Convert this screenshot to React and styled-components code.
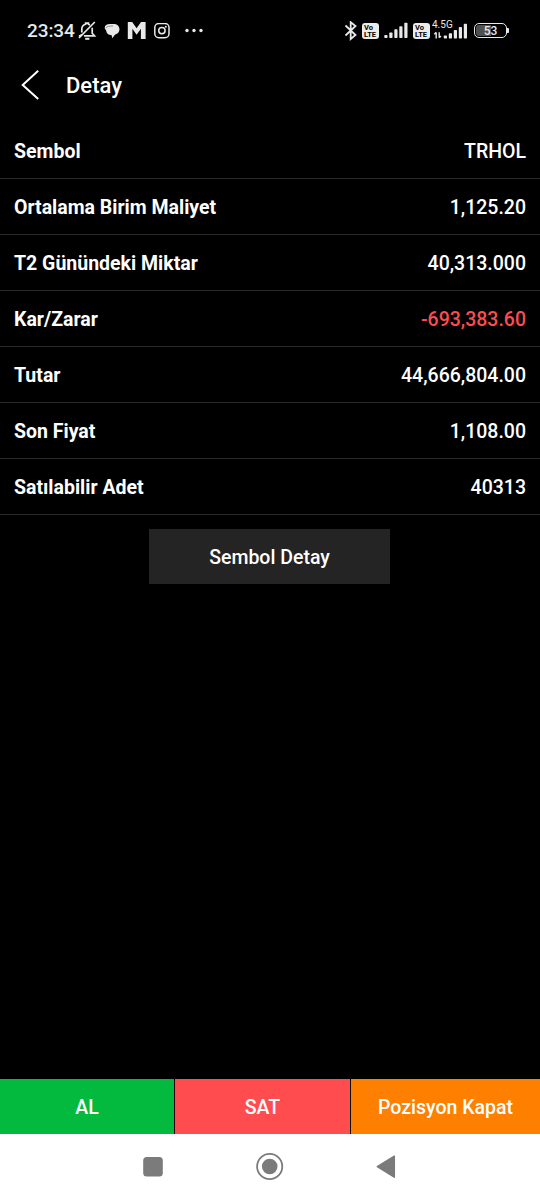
import React from "react";
import styled, { createGlobalStyle } from "styled-components";

const GlobalStyle = createGlobalStyle`
  * { box-sizing: border-box; }
  body { margin: 0; background: #000; }
  button { border: 0; padding: 0; font: inherit; color: inherit; background: none; }
`;

const Screen = styled.div`
  display: flex;
  flex-direction: column;
  width: 540px;
  height: 1199px;
  background: #000;
  color: #fff;
  font-family: Roboto, "Liberation Sans", sans-serif;
  font-size: 19.5px;
  font-weight: 500;
  line-height: 23px;
`;

const StatusBar = styled.div`
  display: flex;
  justify-content: space-between;
  align-items: center;
  height: 60px;
  padding: 1px 31px 0 27px;
  color: #e9e9e9;
`;

const StatusGroup = styled.div`
  display: flex;
  align-items: center;
  svg { display: block; }
`;

const Clock = styled.span`
  width: 51px;
  font-size: 19px;
  line-height: 22px;
  letter-spacing: -0.1px;
  padding-top: 1px;
`;

const Glyph = styled.svg`
  flex: none;
  margin-left: ${(p) => p.$gap || 0}px;
`;

const VolteBadge = styled.span`
  display: flex;
  flex-direction: column;
  justify-content: center;
  align-items: flex-start;
  width: 17px;
  height: 16px;
  margin-left: ${(p) => p.$gap}px;
  padding-left: 2px;
  border-radius: 3px;
  background: #ececec;
  color: #000;
  font-size: 7.5px;
  line-height: 7px;
  font-weight: 700;
`;

const NetworkSignal = styled.span`
  display: flex;
  flex-direction: column;
  align-items: flex-start;
  width: 37px;
  height: 18px;
  margin: -3px 0 0 2px;
`;

const NetworkType = styled.span`
  height: 3px;
  font-size: 10px;
  line-height: 10px;
  font-weight: 400;
  white-space: nowrap;
`;

const Battery = styled.span`
  display: flex;
  align-items: center;
  margin-left: 5px;
`;

const BatteryBody = styled.span`
  width: 33px;
  height: 15px;
  border: 1.6px solid #e9e9e9;
  border-radius: 5px;
  background: linear-gradient(90deg, #505050 53%, #000 53%);
  background-clip: content-box;
  padding: 1px;
  font-size: 12px;
  line-height: 12px;
  font-weight: 500;
  text-align: center;
`;

const BatteryTip = styled.span`
  width: 2px;
  height: 5px;
  border-radius: 0 1px 1px 0;
  background: #e9e9e9;
`;

const Header = styled.header`
  display: flex;
  align-items: center;
  height: 63px;
  padding: 0 20px 11px;
`;

const BackButton = styled.button`
  display: flex;
  width: 46px;
  padding-bottom: 2px;
`;

const Title = styled.h1`
  margin: 0;
  font-size: 22px;
  font-weight: 500;
  line-height: 26px;
`;

const Details = styled.dl`
  margin: 0;
`;

const DetailRow = styled.div`
  display: flex;
  justify-content: space-between;
  align-items: center;
  height: 56px;
  padding: 2px 14px 0;
  border-bottom: 1px solid #2b2b2b;
`;

const Label = styled.dt`
  font-weight: 700;
`;

const Value = styled.dd`
  margin: 0;
  color: ${(p) => (p.$negative ? "#fb4d50" : "#fff")};
`;

const SymbolButton = styled.button`
  width: 241px;
  height: 55px;
  margin: 14px auto 0 149px;
  padding-top: 2px;
  line-height: 23px;
  background: #242424;
`;

const Spacer = styled.div`
  flex: 1;
`;

const ActionBar = styled.div`
  display: grid;
  grid-template-columns: 174px 175px 1fr;
  gap: 1px;
  height: 55px;
`;

const Action = styled.button`
  padding-top: 2px;
  line-height: 23px;
  background: ${(p) => p.$color};
`;

const NavBar = styled.nav`
  display: flex;
  align-items: center;
  height: 65px;
  padding-left: 143px;
  background: #fff;
  color: #7b7b7b;
`;

const Bars = ({ gap }) => (
  <Glyph $gap={gap} width="25" height="17" viewBox="0 0 25 17" fill="#e9e9e9">
    <rect x="0.3" y="13" width="3.2" height="3" rx=".7" />
    <rect x="5.3" y="10.6" width="3.2" height="5.4" rx=".7" />
    <rect x="10.3" y="7.3" width="3.2" height="8.7" rx=".7" />
    <rect x="15.3" y="4.3" width="3.2" height="11.7" rx=".7" />
    <rect x="20.3" y="0.8" width="3.2" height="15.2" rx=".7" />
  </Glyph>
);

const Volte = ({ gap }) => (
  <VolteBadge $gap={gap}>
    <span>Vo</span>
    <span>LTE</span>
  </VolteBadge>
);

const rows = [
  ["Sembol", "TRHOL"],
  ["Ortalama Birim Maliyet", "1,125.20"],
  ["T2 Günündeki Miktar", "40,313.000"],
  ["Kar/Zarar", "-693,383.60"],
  ["Tutar", "44,666,804.00"],
  ["Son Fiyat", "1,108.00"],
  ["Satılabilir Adet", "40313"],
];

export default function App() {
  return (
    <Screen>
      <GlobalStyle />
      <StatusBar>
        <StatusGroup>
          <Clock>23:34</Clock>
          <Glyph width="19" height="20" viewBox="0 0 19 20" fill="none" stroke="#e9e9e9" strokeWidth="1.7">
            <path d="M3.8 11.5V8.2c0-2.4 1.5-4.3 3.8-4.9V2.2h2.8v1.1l1.6.7M14.2 6.8v5.4l2.3 2.6H6M1 17 16.8 1" />
            <path d="M7.2 17.8h4.2" strokeWidth="2" />
            <path d="M.8 14.8h1.6l1.4-1.6" />
          </Glyph>
          <Glyph $gap="7" width="16" height="16" viewBox="0 0 16 16" fill="#e9e9e9">
            <path d="M6 1h4a5.3 5.3 0 0 1 1.2 10.5L8.2 15.2 7.7 12.2C4.5 12 2.3 10.2 2.3 7.7L.7 5.2C.6 2.6 2.7 1 6 1Z" />
            <path d="M1.8 5.2C2.8 3.4 4.7 3 9 3" fill="none" stroke="#777" strokeWidth=".8" />
          </Glyph>
          <Glyph $gap="7" width="20" height="20" viewBox="0 0 20 20" fill="#e9e9e9">
            <path d="M.8 18V1h4.4l4.4 6.3L14 1h4.6v17h-4.7V7.8l-4.3 6-4.2-6V18Z" />
          </Glyph>
          <Glyph $gap="7" width="16" height="16" viewBox="0 0 16 16" fill="none" stroke="#e9e9e9" strokeWidth="1.5">
            <rect x=".8" y=".5" width="14.2" height="14.2" rx="4" />
            <circle cx="7.9" cy="7.6" r="3.2" />
            <circle cx="11.8" cy="3.7" r="1" fill="#e9e9e9" stroke="none" />
          </Glyph>
          <Glyph $gap="15" width="20" height="6" viewBox="0 0 20 6" fill="#e9e9e9">
            <circle cx="2" cy="2.5" r="1.7" />
            <circle cx="9" cy="2.5" r="1.7" />
            <circle cx="16" cy="2.5" r="1.7" />
          </Glyph>
        </StatusGroup>
        <StatusGroup>
          <Glyph width="14" height="20" viewBox="0 0 14 20" fill="none" stroke="#e9e9e9" strokeWidth="1.8">
            <path d="m1.5 4.5 10 9.5L6.7 18V1.2L11.5 5l-10 9.5" />
          </Glyph>
          <Volte gap={4} />
          <Bars gap={5} />
          <Volte gap={4} />
          <NetworkSignal>
            <NetworkType>4.5G</NetworkType>
            <Glyph width="37" height="17" viewBox="0 0 37 17" fill="#e9e9e9">
              <path d="M4.2 9.5v6M2.3 11.2l1.9-1.9M7.2 9.2v5.5M9 13l-1.8 1.8" fill="none" stroke="#e9e9e9" strokeWidth="1.4" />
              <rect x="11.8" y="12.5" width="3.2" height="3" rx=".7" />
              <rect x="16.8" y="10.3" width="3.2" height="5.2" rx=".7" />
              <rect x="21.8" y="7" width="3.2" height="8.5" rx=".7" />
              <rect x="26.8" y="4" width="3.2" height="11.5" rx=".7" />
              <rect x="31.8" y="0.7" width="3.2" height="14.8" rx=".7" />
            </Glyph>
          </NetworkSignal>
          <Battery>
            <BatteryBody>53</BatteryBody>
            <BatteryTip />
          </Battery>
        </StatusGroup>
      </StatusBar>
      <Header>
        <BackButton aria-label="Geri">
          <svg width="20" height="32" viewBox="0 0 20 32" fill="none" stroke="#fff" strokeWidth="2">
            <path d="M18.2 1.8 2.7 16l15.5 14" />
          </svg>
        </BackButton>
        <Title>Detay</Title>
      </Header>
      <Details>
        {rows.map(([label, value]) => (
          <DetailRow key={label}>
            <Label>{label}</Label>
            <Value $negative={value.startsWith("-")}>{value}</Value>
          </DetailRow>
        ))}
      </Details>
      <SymbolButton>Sembol Detay</SymbolButton>
      <Spacer />
      <ActionBar>
        <Action $color="#03ba3f">AL</Action>
        <Action $color="#ff4d4f">SAT</Action>
        <Action $color="#ff8000">Pozisyon Kapat</Action>
      </ActionBar>
      <NavBar>
        <Glyph width="20" height="20" viewBox="0 0 20 20" fill="currentColor">
          <rect x=".2" y="0" width="19.6" height="19.6" rx="3.5" />
        </Glyph>
        <Glyph $gap="93" width="28" height="28" viewBox="0 0 28 28" fill="none" stroke="currentColor" strokeWidth="1.8">
          <circle cx="13.7" cy="13.5" r="12.6" />
          <circle cx="13.7" cy="13.5" r="7.8" fill="currentColor" stroke="none" />
        </Glyph>
        <Glyph $gap="92" width="20" height="24" viewBox="0 0 20 24" fill="currentColor" stroke="currentColor" strokeWidth="1.5" strokeLinejoin="round">
          <path d="M1.3 11.7 18.3 1.2v21Z" />
        </Glyph>
      </NavBar>
    </Screen>
  );
}
